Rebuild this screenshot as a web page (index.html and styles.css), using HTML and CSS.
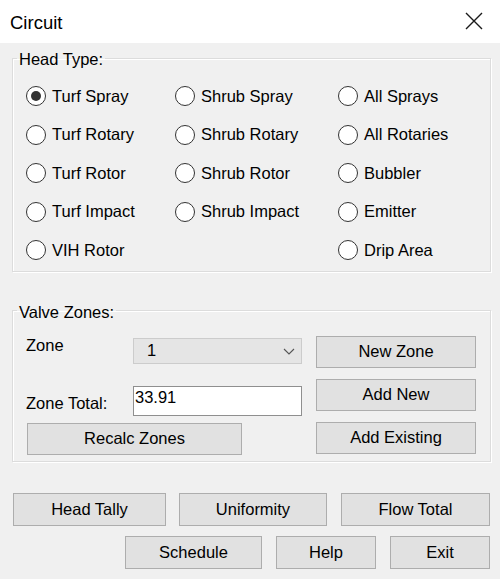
FILE: index.html
```html
<!DOCTYPE html>
<html>
<head>
<meta charset="utf-8">
<title>Circuit</title>
<link rel="stylesheet" href="styles.css">
</head>
<body>
<div class="window">
  <div class="titlebar">
    <span class="title">Circuit</span>
    <svg class="close" width="18" height="18" viewBox="0 0 18 18">
      <path d="M1 1 L17 17 M17 1 L1 17" stroke="#1a1a1a" stroke-width="1.4" fill="none"/>
    </svg>
  </div>
  <div class="content">
    <fieldset class="group head-group">
      <legend>Head Type:</legend>
      <div class="radio-grid">
        <label class="radio"><span class="dot checked"></span>Turf Spray</label>
        <label class="radio"><span class="dot"></span>Shrub Spray</label>
        <label class="radio"><span class="dot"></span>All Sprays</label>
        <label class="radio"><span class="dot"></span>Turf Rotary</label>
        <label class="radio"><span class="dot"></span>Shrub Rotary</label>
        <label class="radio"><span class="dot"></span>All Rotaries</label>
        <label class="radio"><span class="dot"></span>Turf Rotor</label>
        <label class="radio"><span class="dot"></span>Shrub Rotor</label>
        <label class="radio"><span class="dot"></span>Bubbler</label>
        <label class="radio"><span class="dot"></span>Turf Impact</label>
        <label class="radio"><span class="dot"></span>Shrub Impact</label>
        <label class="radio"><span class="dot"></span>Emitter</label>
        <label class="radio"><span class="dot"></span>VIH Rotor</label>
        <span class="empty"></span>
        <label class="radio"><span class="dot"></span>Drip Area</label>
      </div>
    </fieldset>

    <fieldset class="group valve-group">
      <legend>Valve Zones:</legend>
      <div class="valve-body">
        <div class="valve-left">
          <div class="field-row zone-row">
            <span class="field-label">Zone</span>
            <div class="combo">
              <span class="combo-value">1</span>
              <svg class="chev" width="12" height="7" viewBox="0 0 12 7">
                <path d="M1 1 L6 6 L11 1" stroke="#555" stroke-width="1.1" fill="none"/>
              </svg>
            </div>
          </div>
          <div class="field-row total-row">
            <span class="field-label total-label">Zone Total:</span>
            <input class="text-input" type="text" value="33.91">
          </div>
          <button class="btn recalc">Recalc Zones</button>
        </div>
        <div class="valve-right">
          <button class="btn side-btn">New Zone</button>
          <button class="btn side-btn">Add New</button>
          <button class="btn side-btn">Add Existing</button>
        </div>
      </div>
    </fieldset>

    <div class="btn-row row1">
      <button class="btn b-tally">Head Tally</button>
      <button class="btn b-unif">Uniformity</button>
      <button class="btn b-flow">Flow Total</button>
    </div>
    <div class="btn-row row2">
      <button class="btn b-sched">Schedule</button>
      <button class="btn b-help">Help</button>
      <button class="btn b-exit">Exit</button>
    </div>
  </div>
</div>
</body>
</html>
```

FILE: styles.css
```css
* { box-sizing: border-box; }

html, body {
  margin: 0;
  padding: 0;
}

body {
  width: 500px;
  height: 579px;
  background: #f0f0f0;
  font-family: "Liberation Sans", Arial, sans-serif;
  font-size: 16.5px;
  color: #000;
  overflow: hidden;
}

.window {
  width: 500px;
  height: 579px;
  background: #f0f0f0;
}

.titlebar {
  height: 43px;
  background: #fff;
  display: flex;
  align-items: flex-start;
  padding: 2px 0 0 10px;
}

.title {
  font-size: 18.5px;
  line-height: 41px;
}

.close {
  margin-left: auto;
  margin-right: 17px;
  margin-top: 10px;
}

.content {
  padding: 0 9px 0 12px;
}

.group {
  margin: 0;
  padding: 0;
  border: 1px solid #dcdcdc;
  box-shadow: 1px 1px 0 #fff, inset 1px 1px 0 #fff;
  min-width: 0;
}

.group legend {
  padding: 0 2px;
  margin-left: 4px;
  line-height: 20px;
  font-size: 16.5px;
  position: relative;
  top: 1px;
}

.head-group {
  margin-top: 5px;
}

.radio-grid {
  display: grid;
  grid-template-columns: 149px 163px 1fr;
  grid-auto-rows: 38.5px;
  padding: 9px 0 1px 13px;
}

.radio {
  display: flex;
  align-items: center;
  line-height: 19px;
  white-space: nowrap;
}

.dot {
  width: 20px;
  height: 20px;
  border: 1.5px solid #333;
  border-radius: 50%;
  background: #fff;
  margin-right: 6px;
  flex: none;
  display: flex;
  align-items: center;
  justify-content: center;
}

.dot.checked::after {
  content: "";
  width: 10px;
  height: 10px;
  border-radius: 50%;
  background: #333;
}

.valve-group {
  margin-top: 29px;
}

.valve-body {
  display: flex;
  padding: 15px 14px 6px 13px;
  gap: 14px;
}

.valve-left {
  width: 276px;
  display: flex;
  flex-direction: column;
}

.field-row {
  display: flex;
  align-items: flex-start;
}

.field-label {
  width: 107px;
  line-height: 19px;
  flex: none;
}

.combo {
  margin-top: 2px;
  width: 169px;
  height: 26px;
  background: #e5e5e5;
  border: 1px solid #cccccc;
  display: flex;
  align-items: center;
  padding-left: 13px;
  line-height: 19px;
}

.combo-value {
  flex: 1;
}

.chev {
  margin-right: 6px;
  margin-top: 1px;
}

.total-row {
  margin-top: 22px;
}

.total-label {
  margin-top: 8px;
}

.text-input {
  width: 169px;
  height: 30px;
  margin: 0;
  border: 1px solid #8f8f8f;
  background: #fff;
  padding: 1px 2px 8px 1px;
  font-family: "Liberation Sans", Arial, sans-serif;
  font-size: 16.5px;
  line-height: 19px;
  color: #000;
  outline: none;
}

.btn {
  display: block;
  margin: 0;
  padding: 0;
  background: #e1e1e1;
  border: 1px solid #adadad;
  font-family: "Liberation Sans", Arial, sans-serif;
  font-size: 16.5px;
  line-height: 19px;
  color: #000;
  text-align: center;
}

.recalc {
  margin-top: 7px;
  margin-left: 1px;
  width: 215px;
  height: 32px;
}

.valve-right {
  display: flex;
  flex-direction: column;
  gap: 11px;
}

.side-btn {
  width: 160px;
  height: 32px;
}

.btn-row {
  display: flex;
  gap: 14px;
}

.row1 {
  margin-top: 31px;
  padding-left: 1px;
}

.row2 {
  margin-top: 10px;
  justify-content: flex-end;
  padding-right: 1px;
}

.btn-row .btn {
  height: 33px;
}

.b-tally { width: 153px; }
.b-unif { width: 148px; margin-left: -1px; }
.b-flow { width: 149px; }
.b-sched { width: 137px; }
.b-help { width: 100px; }
.b-exit { width: 100px; }
```
